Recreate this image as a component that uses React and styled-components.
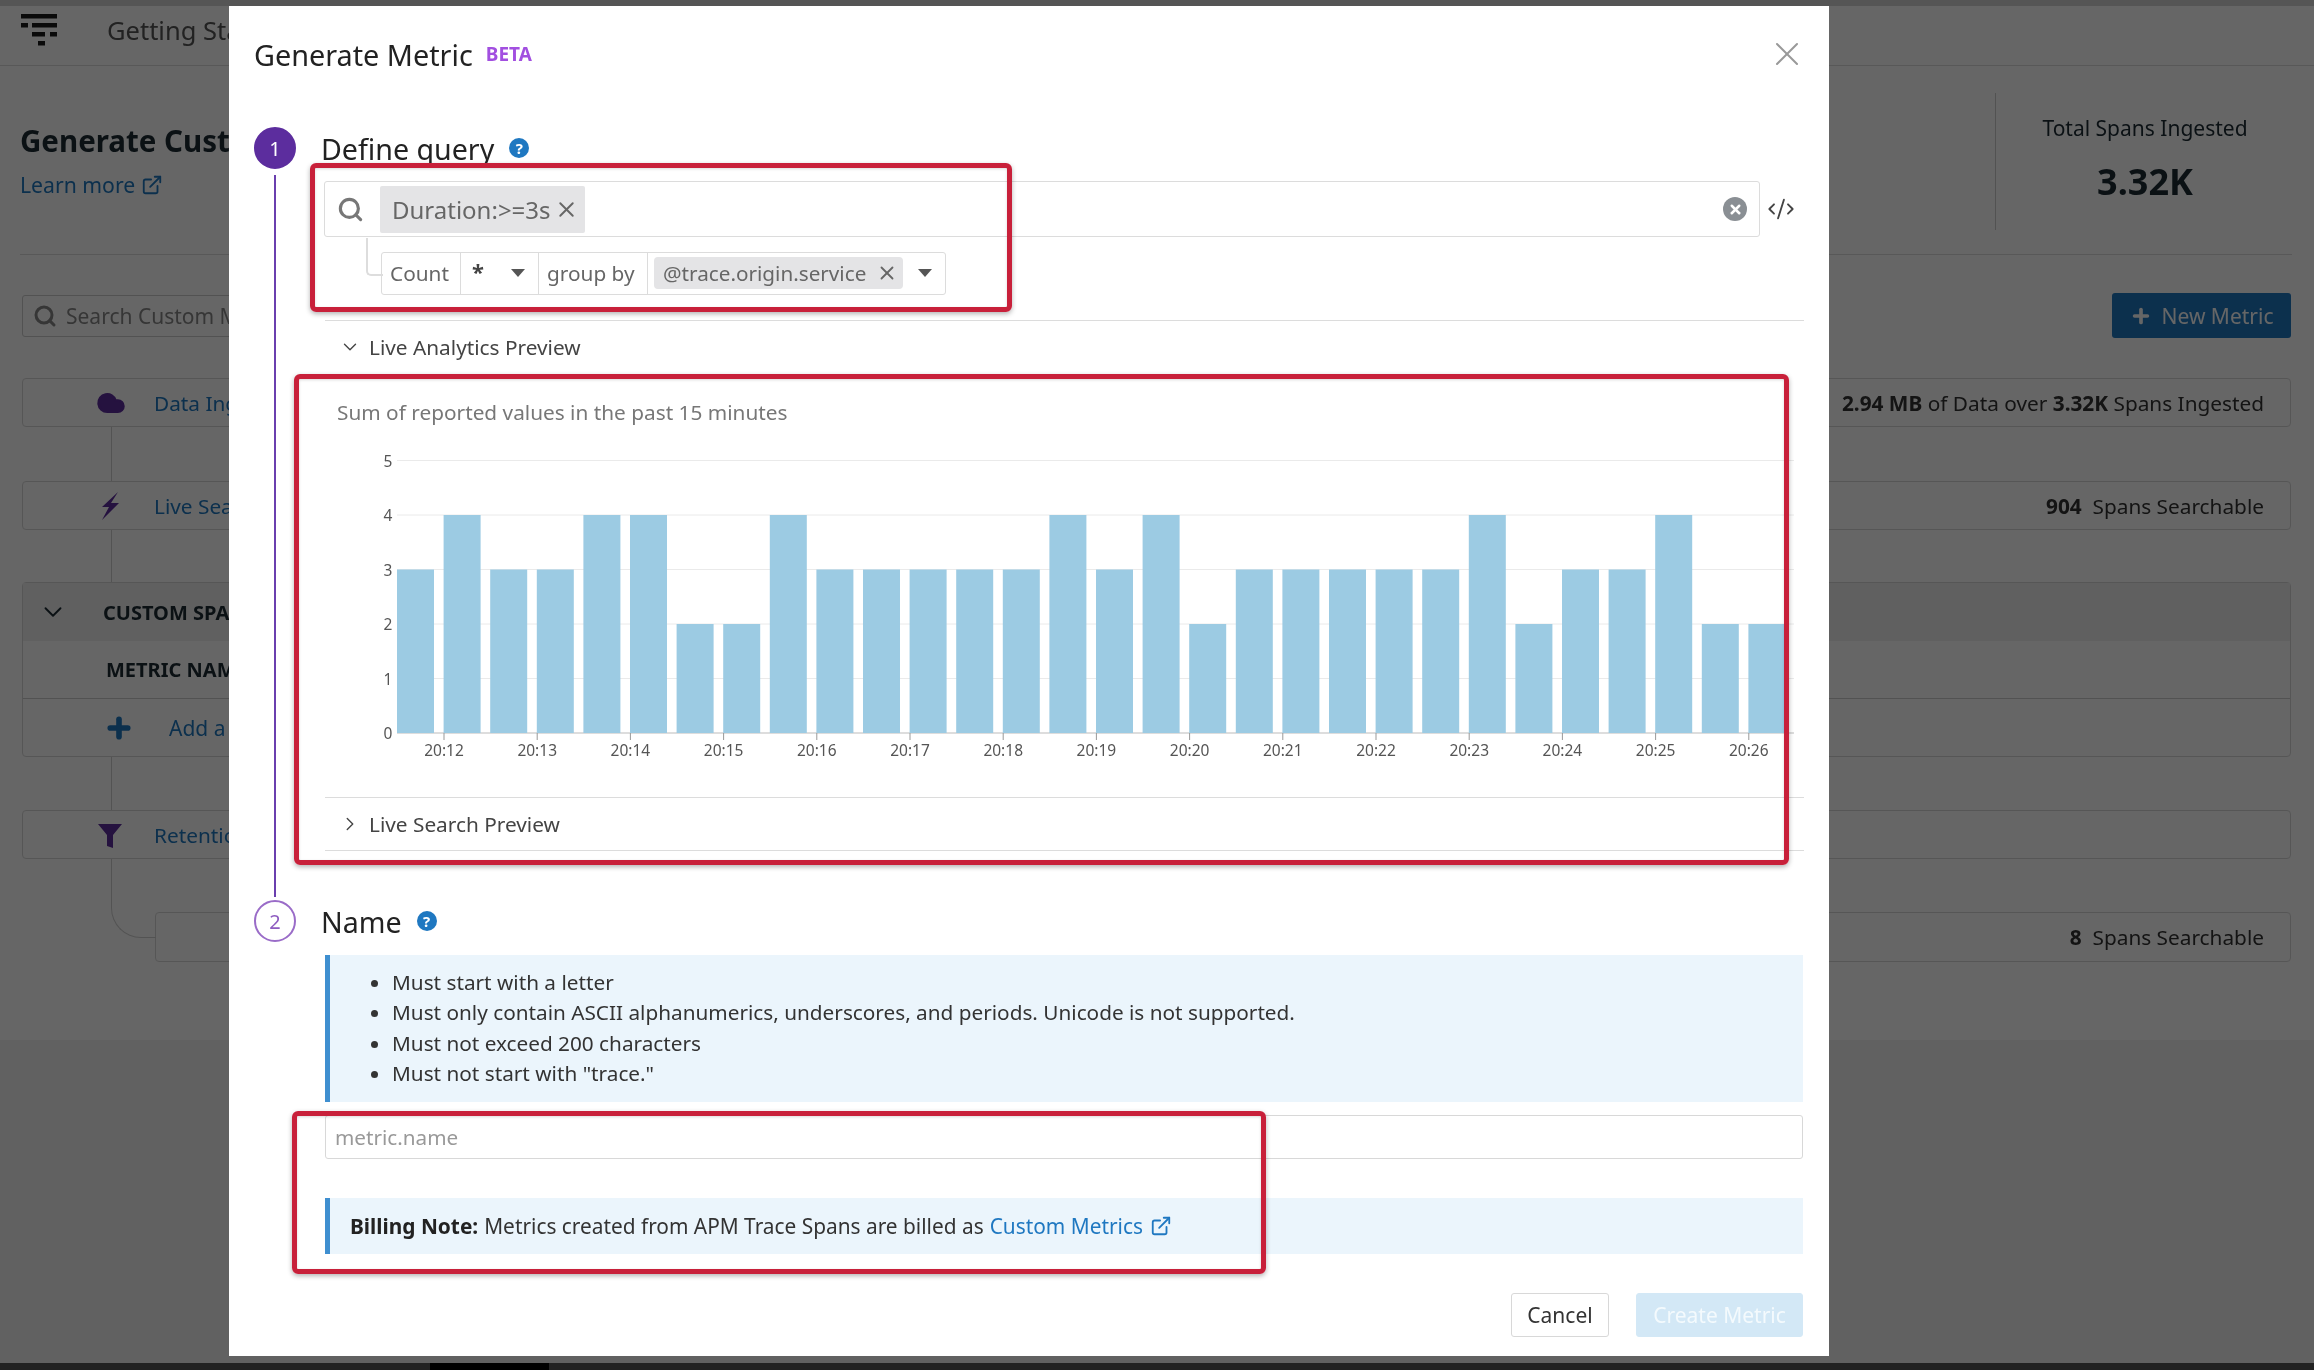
import React from "react";
import styled, { createGlobalStyle } from "styled-components";
import { Search, X, ChevronDown, ChevronRight, ExternalLink, Plus, Cloud, CodeXml } from "lucide-react";

const BARS = [3, 4, 3, 3, 4, 4, 2, 2, 4, 3, 3, 3, 3, 3, 4, 3, 4, 2, 3, 3, 3, 3, 3, 4, 2, 3, 3, 4, 2, 2];
const TICKS = ["20:12", "20:13", "20:14", "20:15", "20:16", "20:17", "20:18", "20:19", "20:20", "20:21", "20:22", "20:23", "20:24", "20:25", "20:26"];
const RULES = [
    "Must start with a letter",
    "Must only contain ASCII alphanumerics, underscores, and periods. Unicode is not supported.",
    "Must not exceed 200 characters",
    'Must not start with "trace."',
];

const GlobalStyle = createGlobalStyle`
    * { box-sizing: border-box; }
    html, body { margin: 0; padding: 0; background: #222; }
    body { font-family: "Noto Sans", "Open Sans", sans-serif; color: #1c2b34; }
`;

const Screen = styled.div`
    position: relative;
    width: 2314px;
    height: 1370px;
    overflow: hidden;
    display: flex;
    flex-direction: column;
    filter: blur(0.6px);
`;

const TopStrip = styled.div`
    height: 6px;
    background: #555;
    flex: none;
`;

const BottomStrip = styled.div`
    height: 7px;
    flex: none;
    background: #222;
    padding-left: 430px;
    &::before {
        content: "";
        display: block;
        width: 119px;
        height: 7px;
        background: #000;
    }
`;

const Page = styled.div`
    flex: 1;
    display: flex;
    flex-direction: column;
    background: #fff;
`;

const Nav = styled.div`
    height: 60px;
    flex: none;
    display: flex;
    align-items: flex-start;
    gap: 50px;
    padding: 8px 0 0 21px;
    border-bottom: 1px solid #ddd;
    font-size: 25.5px;
    line-height: 32px;
    color: #555;
`;

const Header = styled.div`
    height: 189px;
    flex: none;
    margin: 0 22px 0 20px;
    display: flex;
    justify-content: space-between;
    align-items: flex-start;
    border-bottom: 1px solid #ddd;
`;

const HeaderTitle = styled.div`
    padding-top: 55px;
    h1 {
        margin: 0;
        font-size: 29.5px;
        line-height: 40px;
        font-weight: 700;
    }
`;

const LearnMore = styled.a`
    display: flex;
    align-items: center;
    gap: 6px;
    margin-top: 9px;
    font-size: 21.2px;
    color: #1f78c1;
`;

const Stat = styled.div`
    margin-top: 27px;
    width: 297px;
    height: 137px;
    border-left: 1px solid #ccc;
    text-align: center;
    padding: 21px 0 0 2px;
    font-size: 21px;
    strong {
        display: block;
        margin-top: 17px;
        font-size: 36px;
        line-height: 46px;
    }
`;

const Toolbar = styled.div`
    height: 123px;
    flex: none;
    padding: 38px 23px 0 22px;
    display: flex;
    justify-content: space-between;
    align-items: flex-start;
`;

const PageSearch = styled.div`
    width: 700px;
    height: 42px;
    margin-top: 2px;
    border: 1px solid #ccc;
    border-radius: 3px;
    display: flex;
    align-items: center;
    gap: 9px;
    padding-left: 10px;
    font-size: 21px;
    color: #888;
`;

const NewMetric = styled.div`
    width: 179px;
    height: 45px;
    background: #1f78c1;
    border-radius: 3px;
    color: #fff;
    font-size: 21px;
    display: flex;
    align-items: center;
    justify-content: center;
    gap: 10px;
`;

const Flow = styled.div`
    margin: 0 23px 0 22px;
    display: flex;
    flex-direction: column;
`;

const Row = styled.div`
    height: ${props => props.$h || 49}px;
    display: flex;
    align-items: center;
    border: 1px solid #d8d8d8;
    border-radius: 4px;
    padding-right: 26px;
    font-size: 20.8px;
    color: #333;
`;

const RowIcon = styled.span`
    width: 131px;
    padding-left: 73px;
    display: flex;
    color: #5e2d9e;
`;

const RowLink = styled.span`
    flex: 1;
    color: #1f78c1;
`;

const Connector = styled.div`
    width: 1px;
    height: ${props => props.$h}px;
    margin-left: 89px;
    background: #d0d0d0;
`;

const Section = styled.div`
    height: 175px;
    border: 1px solid #d8d8d8;
    border-radius: 4px;
    display: flex;
    flex-direction: column;
    font-weight: 700;
    font-size: 20px;
`;

const SectionHead = styled.div`
    height: 58px;
    background: #f0f0f0;
    display: flex;
    align-items: center;
    padding-left: 15px;
    gap: 35px;
`;

const SectionLabel = styled.div`
    height: 58px;
    border-bottom: 1px solid #ccc;
    padding-left: 83px;
    display: flex;
    align-items: center;
`;

const AddRow = styled.div`
    flex: 1;
    display: flex;
    align-items: center;
    gap: 35px;
    padding-left: 81px;
    color: #1f78c1;
    font-weight: 400;
    font-size: 21px;
`;

const SubRowWrap = styled.div`
    position: relative;
    margin-top: 53px;
    padding-left: 133px;
    &::before {
        content: "";
        position: absolute;
        left: 89px;
        top: -53px;
        width: 44px;
        height: 78px;
        border-left: 1px solid #d0d0d0;
        border-bottom: 1px solid #d0d0d0;
        border-bottom-left-radius: 30px;
    }
`;

const PageFoot = styled.div`
    flex: 1;
    margin-top: 78px;
    background: #f2f2f2;
`;

const Backdrop = styled.div`
    position: absolute;
    inset: 6px 0 7px 0;
    background: rgba(0, 0, 0, 0.6);
`;

const Modal = styled.div`
    position: absolute;
    left: 229px;
    top: 6px;
    width: 1600px;
    height: 1350px;
    background: #fff;
    padding: 0 26px 0 25px;
    display: flex;
    flex-direction: column;
`;

const ModalHead = styled.div`
    height: 121px;
    flex: none;
    padding-top: 27px;
    display: flex;
    align-items: flex-start;
    justify-content: space-between;
`;

const ModalTitle = styled.div`
    display: flex;
    align-items: center;
    gap: 13px;
    height: 42px;
    font-size: 28.8px;
    color: #222;
`;

const Beta = styled.span`
    font-size: 19px;
    font-weight: 700;
    color: #a24fe0;
`;

const CloseBtn = styled.span`
    color: #999;
    display: flex;
    margin: 1px -4px 0 0;
`;

const Step = styled.div`
    display: grid;
    grid-template-columns: 42px 1fr;
    column-gap: 25px;
    flex: ${props => (props.$grow ? 1 : "none")};
    height: ${props => (props.$h ? props.$h + "px" : "auto")};
`;

const Rail = styled.div`
    display: flex;
    flex-direction: column;
    align-items: center;
`;

const Badge = styled.div`
    width: 42px;
    height: 42px;
    flex: none;
    border-radius: 50%;
    display: flex;
    align-items: center;
    justify-content: center;
    font-size: 20px;
    background: ${props => (props.$active ? "#5c2d9e" : "#fff")};
    color: ${props => (props.$active ? "#fff" : "#8e5cc0")};
    border: 2px solid ${props => (props.$active ? "#5c2d9e" : "#9a6cc8")};
`;

const RailLine = styled.div`
    flex: 1;
    width: 2px;
    margin: 6px 0 3px;
    background: #6a3fae;
`;

const StepTitle = styled.div`
    height: 42px;
    display: flex;
    align-items: center;
    gap: 15px;
    font-size: 28.6px;
    color: #222;
`;

const Help = styled.span`
    width: 20px;
    height: 20px;
    border-radius: 50%;
    background: #1f78c1;
    color: #fff;
    font-size: 15px;
    font-weight: 700;
    display: flex;
    align-items: center;
    justify-content: center;
`;

const Body = styled.div`
    padding-left: 4px;
`;

const QueryRow = styled.div`
    margin: 12px 0 0 -1px;
    display: flex;
    align-items: center;
`;

const SearchBox = styled.div`
    flex: 1;
    height: 56px;
    border: 1px solid #dcdcdc;
    border-radius: 3px;
    display: flex;
    align-items: center;
    padding: 0 12px 0 12px;
    color: #777;
`;

const QueryChip = styled.span`
    margin-left: 16px;
    height: 47px;
    width: 205px;
    background: #e4e4e6;
    border-radius: 2px;
    display: flex;
    align-items: center;
    justify-content: space-between;
    padding: 0 6px 0 12px;
    font-size: 24px;
    color: #666;
`;

const ClearBtn = styled.span`
    margin-left: auto;
    width: 24px;
    height: 24px;
    border-radius: 50%;
    background: #8a8f94;
    color: #fff;
    display: flex;
    align-items: center;
    justify-content: center;
`;

const CodeBtn = styled.span`
    width: 44px;
    padding-right: 3px;
    display: flex;
    justify-content: center;
    color: #444;
`;

const Aggregator = styled.div`
    position: relative;
    margin: 15px 0 0 56px;
    width: 565px;
    height: 43px;
    border: 1px solid #dcdcdc;
    border-radius: 3px;
    display: flex;
    align-items: center;
    font-size: 20.8px;
    color: #666;
    &::before {
        content: "";
        position: absolute;
        left: -16px;
        top: -15px;
        width: 15px;
        height: 36px;
        border-left: 2px solid #ddd;
        border-bottom: 2px solid #ddd;
        border-bottom-left-radius: 5px;
    }
`;

const Cell = styled.div`
    width: ${props => props.$w}px;
    height: 100%;
    flex: none;
    display: flex;
    align-items: center;
    justify-content: ${props => (props.$between ? "space-between" : "flex-start")};
    padding: 0 ${props => (props.$between ? 13 : 0)}px 2px ${props => (props.$between ? 11 : 8)}px;
    border-right: ${props => (props.$last ? "none" : "1px solid #dcdcdc")};
`;

const Star = styled.span`
    font-size: 22px;
    font-weight: 700;
    color: #444;
    line-height: 1;
    margin-top: -3px;
`;

const GroupChip = styled.span`
    height: 32px;
    width: 249px;
    margin-left: -5px;
    background: #e4e4e6;
    border-radius: 4px;
    display: flex;
    align-items: center;
    justify-content: space-between;
    padding: 0 5px 0 9px;
    font-size: 20.7px;
    color: #666;
    flex: none;
`;

const Caret = styled.span`
    width: 0;
    height: 0;
    flex: none;
    border-left: 7px solid transparent;
    border-right: 7px solid transparent;
    border-top: 8px solid #555;
`;

const Divider = styled.div`
    height: 1px;
    background: #dcdcdc;
    margin-top: ${props => props.$mt}px;
`;

const PreviewToggle = styled.div`
    height: ${props => props.$h}px;
    display: flex;
    align-items: center;
    gap: 8px;
    padding-left: 14px;
    font-size: 20.8px;
    color: #444;
`;

const ChartNote = styled.div`
    margin: 25px 0 0 12px;
    font-size: 20.8px;
    line-height: 28px;
    color: #777;
`;

const ChartSvg = styled.svg`
    display: block;
    margin-top: 21px;
    text {
        font-family: "Noto Sans", sans-serif;
        font-size: 15.5px;
        fill: #555;
    }
`;

const InfoBox = styled.div`
    margin-top: 13px;
    border-left: 5px solid #3f8fd0;
    background: #ebf5fc;
    height: ${props => props.$h}px;
`;

const RuleList = styled.ul`
    margin: 0;
    padding: 12px 0 0 62px;
    font-size: 20.75px;
    line-height: 30.35px;
    color: #333;
`;

const NameInput = styled.div`
    margin-top: 13px;
    height: 44px;
    border: 1px solid #d8d8d8;
    border-radius: 3px;
    padding-left: 9px;
    display: flex;
    align-items: center;
    font-size: 20.7px;
    color: #999;
`;

const BillingNote = styled(InfoBox)`
    margin-top: 39px;
    display: flex;
    align-items: center;
    gap: 6px;
    padding-left: 20px;
    font-size: 20.85px;
    color: #333;
    strong { color: #222; }
    a {
        display: flex;
        align-items: center;
        gap: 7px;
        color: #1f78c1;
    }
`;

const Footer = styled.div`
    margin-top: 39px;
    display: flex;
    justify-content: flex-end;
    gap: 27px;
`;

const Button = styled.div`
    height: 44px;
    width: ${props => props.$w}px;
    border-radius: 3px;
    display: flex;
    align-items: center;
    justify-content: center;
    font-size: 21px;
    border: 1px solid ${props => (props.$primary ? "#d3e8f6" : "#d8d8d8")};
    background: ${props => (props.$primary ? "#d3e8f6" : "#fff")};
    color: ${props => (props.$primary ? "#f4fafd" : "#333")};
`;

const Annotation = styled.div`
    position: absolute;
    left: ${props => props.$x}px;
    top: ${props => props.$y}px;
    width: ${props => props.$w}px;
    height: ${props => props.$h}px;
    border: 5px solid #c8203a;
    border-radius: 6px;
    box-shadow: 0 2px 5px rgba(0, 0, 0, 0.3), inset 0 1px 3px rgba(0, 0, 0, 0.15);
    pointer-events: none;
`;

const FilterIcon = () => (
    <svg width="36" height="32" viewBox="0 0 36 32" fill="#1a1a1a">
        <rect x="0" y="0" width="36" height="4.5" />
        <rect x="0" y="9" width="7" height="4.5" />
        <rect x="11" y="9" width="25" height="4.5" />
        <rect x="11" y="18" width="13" height="4.5" />
        <rect x="29" y="18" width="7" height="4.5" />
        <rect x="17" y="27" width="7" height="4.5" />
    </svg>
);

const BoltIcon = () => (
    <svg width="28" height="30" viewBox="0 0 28 30" fill="#5e2d9e">
        <path d="M22 1 L6 16 L13 16 L6 29 L23 12 L15 12 Z" />
    </svg>
);

const FunnelIcon = () => (
    <svg width="28" height="28" viewBox="0 0 28 28" fill="#5e2d9e">
        <path d="M2 3 H26 L17 14 V27 L11 25 V14 Z" />
    </svg>
);

const ChartArea = () => {
    const width = 1479;
    const left = 72;
    const pitch = 46.6;
    const zero = 286;
    const unit = 54.5;
    return (
        <ChartSvg width={width} height={320} viewBox={`0 0 ${width} 320`}>
            {[0, 1, 2, 3, 4, 5].map(v => (
                <g key={v}>
                    <line x1={left} x2={1469} y1={zero - v * unit} y2={zero - v * unit} stroke={v === 0 ? "#bbb" : "#eaeaea"} />
                    <text x={left - 9} y={zero - v * unit + 6} textAnchor="middle">{v}</text>
                </g>
            ))}
            {BARS.map((v, i) => (
                <rect key={i} x={left + i * pitch} y={zero - v * unit} width={i === 29 ? 36 : 37} height={v * unit} fill="#9ccbe3" />
            ))}
            {TICKS.map((t, i) => {
                const x = left + 47 + i * 93.2;
                return (
                    <g key={t}>
                        <line x1={x} x2={x} y1={zero} y2={zero + 7} stroke="#999" />
                        <text x={x} y={zero + 23} textAnchor="middle">{t}</text>
                    </g>
                );
            })}
        </ChartSvg>
    );
};

export default function App() {
    return (
        <Screen>
            <GlobalStyle />
            <TopStrip />
            <Page>
                <Nav>
                    <FilterIcon />
                    <span>Getting Started</span>
                </Nav>
                <Header>
                    <HeaderTitle>
                        <h1>Generate Custom Metrics</h1>
                        <LearnMore>Learn more <ExternalLink size={22} /></LearnMore>
                    </HeaderTitle>
                    <Stat>
                        Total Spans Ingested
                        <strong>3.32K</strong>
                    </Stat>
                </Header>
                <Toolbar>
                    <PageSearch><Search size={24} strokeWidth={3} />Search Custom Metrics</PageSearch>
                    <NewMetric><Plus size={22} strokeWidth={4} />New Metric</NewMetric>
                </Toolbar>
                <Flow>
                    <Row>
                        <RowIcon><Cloud size={30} fill="#5e2d9e" /></RowIcon>
                        <RowLink>Data Ingest</RowLink>
                        <span><b>2.94 MB</b> of Data over <b>3.32K</b> Spans Ingested</span>
                    </Row>
                    <Connector $h={54} />
                    <Row>
                        <RowIcon><BoltIcon /></RowIcon>
                        <RowLink>Live Search</RowLink>
                        <span><b>904</b>&nbsp; Spans Searchable</span>
                    </Row>
                    <Connector $h={52} />
                    <Section>
                        <SectionHead><ChevronDown size={30} strokeWidth={1.5} />CUSTOM SPANS</SectionHead>
                        <SectionLabel>METRIC NAME</SectionLabel>
                        <AddRow><Plus size={30} strokeWidth={4.5} />Add a new metric</AddRow>
                    </Section>
                    <Connector $h={53} />
                    <Row>
                        <RowIcon><FunnelIcon /></RowIcon>
                        <RowLink>Retention Filters</RowLink>
                    </Row>
                    <SubRowWrap>
                        <Row $h={50}>
                            <RowLink />
                            <span><b>8</b>&nbsp; Spans Searchable</span>
                        </Row>
                    </SubRowWrap>
                </Flow>
                <PageFoot />
            </Page>
            <BottomStrip />
            <Backdrop />
            <Modal>
                <ModalHead>
                    <ModalTitle>Generate Metric <Beta>BETA</Beta></ModalTitle>
                    <CloseBtn><X size={40} strokeWidth={1.2} /></CloseBtn>
                </ModalHead>
                <Step $h={773}>
                    <Rail>
                        <Badge $active>1</Badge>
                        <RailLine />
                    </Rail>
                    <div>
                        <StepTitle>Define query <Help>?</Help></StepTitle>
                        <Body>
                            <QueryRow>
                                <SearchBox>
                                    <Search size={27} strokeWidth={2.8} />
                                    <QueryChip>Duration:&gt;=3s <X size={25} strokeWidth={1.8} /></QueryChip>
                                    <ClearBtn><X size={15} strokeWidth={4} /></ClearBtn>
                                </SearchBox>
                                <CodeBtn><CodeXml size={28} strokeWidth={1.6} /></CodeBtn>
                            </QueryRow>
                            <Aggregator>
                                <Cell $w={79}>Count</Cell>
                                <Cell $w={78} $between><Star>*</Star> <Caret /></Cell>
                                <Cell $w={109}>group by</Cell>
                                <Cell $w={297} $last $between>
                                    <GroupChip>@trace.origin.service <X size={22} /></GroupChip>
                                    <Caret />
                                </Cell>
                            </Aggregator>
                            <Divider $mt={25} />
                            <PreviewToggle $h={52}><ChevronDown size={22} strokeWidth={1.5} />Live Analytics Preview</PreviewToggle>
                            <ChartNote>Sum of reported values in the past 15 minutes</ChartNote>
                            <ChartArea />
                            <Divider $mt={30} />
                            <PreviewToggle $h={51}><ChevronRight size={22} strokeWidth={1.5} />Live Search Preview</PreviewToggle>
                            <Divider $mt={1} />
                        </Body>
                    </div>
                </Step>
                <Step $grow>
                    <Rail>
                        <Badge>2</Badge>
                    </Rail>
                    <div>
                        <StepTitle>Name <Help>?</Help></StepTitle>
                        <Body>
                            <InfoBox $h={147}>
                                <RuleList>
                                    {RULES.map(r => <li key={r}>{r}</li>)}
                                </RuleList>
                            </InfoBox>
                            <NameInput>metric.name</NameInput>
                            <BillingNote $h={56}>
                                <strong>Billing Note:</strong> Metrics created from APM Trace Spans are billed as
                                <a>Custom Metrics <ExternalLink size={22} /></a>
                            </BillingNote>
                            <Footer>
                                <Button $w={98}>Cancel</Button>
                                <Button $w={167} $primary>Create Metric</Button>
                            </Footer>
                        </Body>
                    </div>
                </Step>
                <Annotation $x={81} $y={157} $w={702} $h={149} />
                <Annotation $x={65} $y={368} $w={1495} $h={491} />
                <Annotation $x={63} $y={1105} $w={974} $h={163} />
            </Modal>
        </Screen>
    );
}
